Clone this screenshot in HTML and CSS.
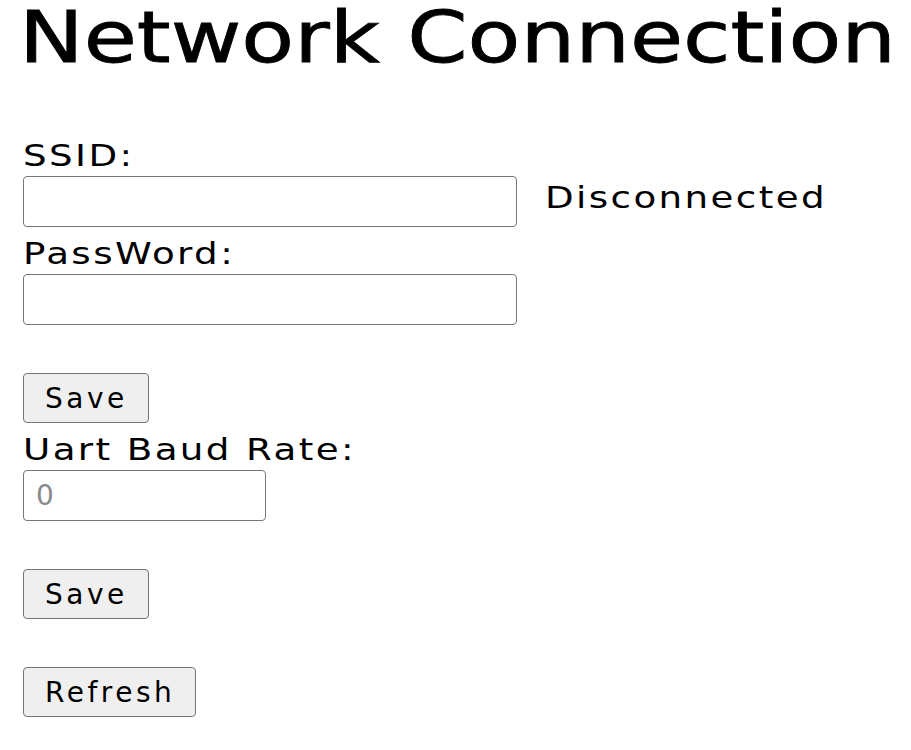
FILE: index.html
```html
<!DOCTYPE html>
<html lang="en">
<head>
<meta charset="utf-8">
<title>Network Connection</title>
<link rel="stylesheet" href="styles.css">
</head>
<body>
<h1 class="title"><span class="title-text">Network Connection</span></h1>
<form class="form" onsubmit="return false">
  <label class="label" for="ssid"><span class="wide">SSID:</span></label>
  <div class="row">
    <input id="ssid" class="field field-wide" type="text">
    <span class="status wide">Disconnected</span>
  </div>
  <label class="label" for="pw"><span class="wide">PassWord:</span></label>
  <input id="pw" class="field field-wide" type="password">
  <button class="btn btn-gap" type="button">Save</button>
  <label class="label" for="baud"><span class="wide">Uart Baud Rate:</span></label>
  <input id="baud" class="field field-short" type="text" placeholder="0">
  <button class="btn btn-gap" type="button">Save</button>
  <button class="btn btn-gap" type="button">Refresh</button>
</form>
</body>
</html>
```
FILE: styles.css
```css
html, body {
  background: #ffffff;
}
body {
  margin: 0;
  padding: 0 23px;
  font-family: "DejaVu Sans", "Liberation Sans", sans-serif;
  color: #000000;
}
.title {
  margin: 0 -23px 56px -4px;
  padding-top: 1px;
  height: 72px;
  font-size: 72px;
  font-weight: normal;
  line-height: 72px;
  white-space: nowrap;
}
.title-text {
  display: inline-block;
  transform: scaleX(1.2);
  transform-origin: 0 50%;
  -webkit-text-stroke: 0.8px #000000;
}
.form {
  display: flex;
  flex-direction: column;
  align-items: flex-start;
}
.label {
  display: block;
  box-sizing: border-box;
  height: 47px;
  padding-top: 5px;
  font-size: 31px;
  line-height: 42px;
  white-space: nowrap;
}
.wide {
  display: inline-block;
  letter-spacing: 2px;
  transform: scaleX(1.2);
  transform-origin: 0 50%;
}
.row {
  display: flex;
  align-items: flex-start;
  gap: 28px;
}
.status {
  margin-top: 3px;
  font-size: 31px;
  white-space: nowrap;
}
.field {
  box-sizing: border-box;
  height: 51px;
  margin: 0;
  padding: 0 12px;
  border: 1px solid #767676;
  border-radius: 4px;
  background: #ffffff;
  font-family: "DejaVu Sans", "Liberation Sans", sans-serif;
  font-size: 28px;
  letter-spacing: 2px;
  color: #000000;
  outline: none;
}
.field::placeholder {
  color: #8a8a8a;
}
.field-wide {
  width: 494px;
}
.field-short {
  width: 243px;
}
.btn {
  box-sizing: border-box;
  height: 50px;
  margin: 0;
  padding: 0 20px 0 21px;
  border: 1px solid #767676;
  border-radius: 4px;
  background: #efefef;
  font-family: "DejaVu Sans", "Liberation Sans", sans-serif;
  font-size: 28px;
  letter-spacing: 3.5px;
  color: #000000;
  white-space: nowrap;
}
.btn-gap {
  margin-top: 48px;
}
```
